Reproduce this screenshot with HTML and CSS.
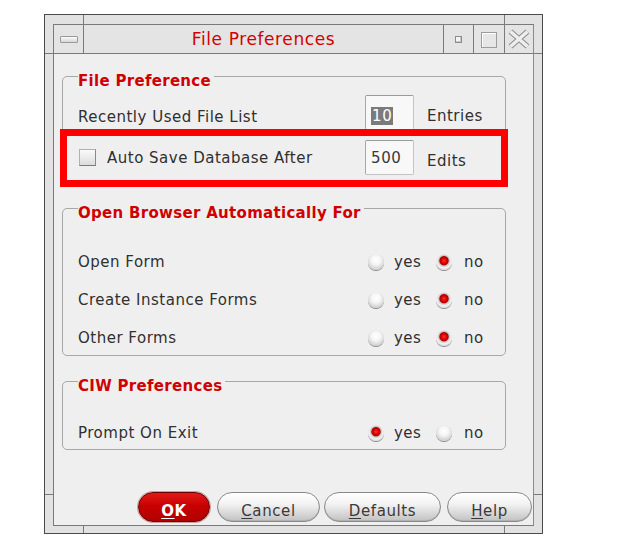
FILE: index.html
```html
<!DOCTYPE html>
<html>
<head>
<meta charset="utf-8">
<title>File Preferences</title>
<link rel="stylesheet" href="styles.css">
</head>
<body>
<div class="window">
  <span class="mark mv mt1"></span>
  <span class="mark mv mt2"></span>
  <span class="mark mv mb1"></span>
  <span class="mark mv mb2"></span>
  <span class="mark mh ml1"></span>
  <span class="mark mh mr1"></span>
  <span class="mark mh ml2"></span>
  <span class="mark mh mr2"></span>
  <div class="inner">
    <div class="titlebar">
      <div class="tb-btn tb-menu"><span class="menu-bar"></span></div>
      <div class="tb-title">File Preferences</div>
      <div class="tb-btn tb-min"><span class="min-dot"></span></div>
      <div class="tb-btn tb-max"><span class="max-box"></span></div>
      <div class="tb-btn tb-close">
        <svg width="22" height="20" viewBox="0 0 22 20">
          <path d="M2.5 2.5 L19.5 17.5 M19.5 2.5 L2.5 17.5" stroke="#8c8c8c" stroke-width="5.5" fill="none"/>
          <path d="M2.5 2.5 L19.5 17.5 M19.5 2.5 L2.5 17.5" stroke="#eeeeee" stroke-width="3.5" fill="none"/>
        </svg>
      </div>
    </div>
    <div class="content">
      <div class="group g1">
        <div class="group-title">File Preference</div>
        <div class="frow first">
          <span class="label">Recently Used File List</span>
          <span class="field"><span class="sel">10</span></span>
          <span class="unit">Entries</span>
        </div>
        <div class="frow second">
          <span class="label check-label"><span class="checkbox"></span>Auto Save Database After</span>
          <span class="field">500</span>
          <span class="unit">Edits</span>
        </div>
      </div>

      <div class="group g2">
        <div class="group-title">Open Browser Automatically For</div>
        <div class="rows">
          <div class="rrow">
            <span class="label">Open Form</span>
            <span class="opt"><span class="radio"></span>yes</span>
            <span class="opt"><span class="radio on"></span>no</span>
          </div>
          <div class="rrow">
            <span class="label">Create Instance Forms</span>
            <span class="opt"><span class="radio"></span>yes</span>
            <span class="opt"><span class="radio on"></span>no</span>
          </div>
          <div class="rrow">
            <span class="label">Other Forms</span>
            <span class="opt"><span class="radio"></span>yes</span>
            <span class="opt"><span class="radio on"></span>no</span>
          </div>
        </div>
      </div>

      <div class="group g3">
        <div class="group-title">CIW Preferences</div>
        <div class="rows">
          <div class="rrow last">
            <span class="label">Prompt On Exit</span>
            <span class="opt"><span class="radio on"></span>yes</span>
            <span class="opt"><span class="radio"></span>no</span>
          </div>
        </div>
      </div>

      <div class="buttons">
        <button class="btn btn-ok"><u>O</u>K</button>
        <button class="btn btn-cancel"><u>C</u>ancel</button>
        <button class="btn btn-defaults"><u>D</u>efaults</button>
        <button class="btn btn-help"><u>H</u>elp</button>
      </div>
    </div>
  </div>
</div>
<div class="highlight"></div>
</body>
</html>
```
FILE: styles.css
```css
html, body {
  margin: 0;
  padding: 0;
  background: #ffffff;
}
body {
  font-family: "DejaVu Sans", "Liberation Sans", sans-serif;
  font-size: 15px;
  color: #303030;
  position: relative;
  width: 643px;
  height: 552px;
  overflow: hidden;
}

.window {
  position: relative;
  margin: 14px 0 0 44px;
  width: 499px;
  height: 520px;
  box-sizing: border-box;
  border: 1px solid #4a4a4a;
  background: #e2e2e2;
  padding: 9px 8px 7px 8px;
  display: flex;
}

.mark { position: absolute; background: #7a7a7a; }
.mv { width: 1px; }
.mh { height: 1px; }
.mt1 { left: 38px; top: 0; height: 9px; }
.mt2 { left: 459px; top: 0; height: 9px; }
.mb1 { left: 38px; top: 511px; height: 7px; }
.mb2 { left: 459px; top: 511px; height: 7px; }
.ml1 { left: 0; top: 38px; width: 8px; }
.mr1 { left: 489px; top: 38px; width: 8px; }
.ml2 { left: 0; top: 479px; width: 8px; }
.mr2 { left: 489px; top: 479px; width: 8px; }

.inner {
  flex: 1;
  display: flex;
  flex-direction: column;
  border: 1px solid #7a7a7a;
  border-right-color: #8a8a8a;
}

.titlebar {
  height: 28px;
  display: flex;
  border-bottom: 1px solid #7a7a7a;
  background: #e4e4e4;
}
.tb-btn {
  width: 29px;
  display: flex;
  align-items: center;
  justify-content: center;
  flex: none;
}
.tb-menu { border-right: 1px solid #7a7a7a; }
.tb-min, .tb-max, .tb-close { border-left: 1px solid #7a7a7a; }
.tb-max { width: 30px; }
.tb-close { width: 28px; }
.menu-bar {
  width: 16px;
  height: 5px;
  border: 1px solid #9a9a9a;
  border-radius: 1px;
  background: linear-gradient(#fbfbfb, #d6d6d6);
  margin-top: 1px;
}
.min-dot {
  width: 5px;
  height: 5px;
  border: 1px solid #8c8c8c;
  background: #f4f4f4;
  box-shadow: inset -1px -1px 0 #c8c8c8;
}
.max-box {
  width: 14px;
  height: 14px;
  border: 1px solid #9c9c9c;
  box-shadow: inset 1px 1px 0 #ffffff;
  background: #e6e6e6;
  margin-top: 1px;
}
.tb-title {
  flex: 1;
  text-align: center;
  color: #d40000;
  font-size: 17px;
  letter-spacing: 0.6px;
  line-height: 28px;
}

.content {
  flex: 1;
  background: #efefef;
  padding: 22px 27px 1px 8px;
  display: flex;
  flex-direction: column;
}

.group {
  border: 1px solid #a8a8a8;
  border-radius: 5px;
  padding: 0 0 0 15px;
}
.group-title {
  margin: -5px 0 0 0;
  height: 18px;
  line-height: 18px;
  width: fit-content;
  padding: 0 3px 0 0;
  background: #efefef;
  color: #d00000;
  font-weight: bold;
  letter-spacing: 0.3px;
}

.label {
  letter-spacing: 0.5px;
  white-space: nowrap;
}

.g1 { height: 106px; box-sizing: border-box; }
.frow {
  display: grid;
  grid-template-columns: 1fr 49px 78px;
  column-gap: 13px;
  align-items: center;
  height: 37px;
}
.frow.first { margin-top: 4px; }
.frow.second { margin-top: 8px; }
.frow .unit { letter-spacing: 0.5px; }
.frow.first .unit { margin-top: 6px; }
.frow.second .unit { margin-top: 7px; }
.frow.first .label { margin-top: 8px; }

.check-label {
  display: flex;
  align-items: center;
  margin-left: 1px;
}
.checkbox {
  width: 15px;
  height: 15px;
  border: 1px solid #b0b0b0;
  border-right-color: #8a8a8a;
  border-bottom-color: #7a7a7a;
  background: linear-gradient(#fafafa, #dcdcdc);
  margin-right: 11px;
}

.field {
  height: 35px;
  box-sizing: border-box;
  border: 1px solid #c4c4c4;
  border-top-color: #9a9a9a;
  border-left-color: #a8a8a8;
  border-radius: 2px;
  background: #f8f8f8;
  padding: 12px 0 0 5px;
  letter-spacing: 0.6px;
  font-size: 15px;
  line-height: 17px;
  color: #3a3a3a;
}
.frow.second .field { padding-top: 9px; }
.sel {
  background: #7b7b7b;
  color: #ffffff;
  padding: 0 1px;
}

.g2 { margin-top: 26px; }
.g3 { margin-top: 25px; }
.rows { margin-top: 19px; }
.rrow {
  display: grid;
  grid-template-columns: 1fr 68px 69px;
  align-items: center;
  height: 38px;
  padding-top: 3px;
  box-sizing: border-box;
}
.rrow.last { height: 35px; }
.opt {
  display: flex;
  align-items: center;
  letter-spacing: 0.4px;
}
.radio {
  width: 16px;
  height: 16px;
  border-radius: 50%;
  margin-right: 10px;
  background: radial-gradient(circle at 50% 38%, #ffffff 0, #f6f6f6 35%, #d4d4d4 70%, #a6a6a6 100%);
  box-shadow: 0 1px 0 #8c8c8c;
}
.opt:last-child .radio { margin-right: 12px; }
.radio.on {
  background: radial-gradient(circle at 50% 42%, #ff3030 0, #dd0000 22%, #b00000 34%, #c6c6c6 42%, #f4f4f4 58%, #d0d0d0 78%, #9a9a9a 100%);
}

.buttons {
  margin-top: auto;
  height: 30px;
  display: flex;
  justify-content: flex-end;
  margin-right: -26px;
  margin-bottom: 2px;
}
.btn {
  height: 30px;
  border-radius: 15px;
  border: 1px solid #8a8a8a;
  background: linear-gradient(#ffffff 0%, #f2f2f2 40%, #d6d6d6 75%, #c2c2c2 100%);
  font-family: "DejaVu Sans", "Liberation Sans", sans-serif;
  font-size: 15px;
  letter-spacing: 0.6px;
  color: #3a3a3a;
  padding: 7px 0 0 0;
  margin: 0;
  box-shadow: inset 0 -1px 0 #b0b0b0;
}
.btn u { text-underline-offset: 2px; }
.btn-ok {
  width: 72px;
  background: linear-gradient(#e01a1a 0%, #c80000 45%, #b00000 100%);
  border-color: #6a0000;
  color: #ffffff;
  font-weight: bold;
  box-shadow: 0 0 0 1px #c8a0a0;
}
.btn-cancel { width: 103px; margin-left: 7px; }
.btn-defaults { width: 117px; margin-left: 4px; }
.btn-help { width: 85px; margin-left: 6px; }

.highlight {
  position: absolute;
  left: 60px;
  top: 129px;
  width: 448px;
  height: 58px;
  box-sizing: border-box;
  border: 7px solid #ff0000;
}
```
